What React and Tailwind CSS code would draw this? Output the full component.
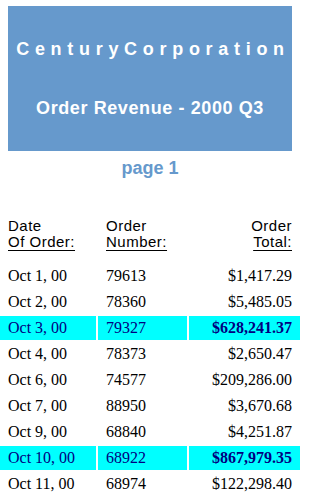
import React from "react";

const rows = [
  ["Oct 1, 00", "79613", "$1,417.29", false],
  ["Oct 2, 00", "78360", "$5,485.05", false],
  ["Oct 3, 00", "79327", "$628,241.37", true],
  ["Oct 4, 00", "78373", "$2,650.47", false],
  ["Oct 6, 00", "74577", "$209,286.00", false],
  ["Oct 7, 00", "88950", "$3,670.68", false],
  ["Oct 9, 00", "68840", "$4,251.87", false],
  ["Oct 10, 00", "68922", "$867,979.35", true],
  ["Oct 11, 00", "68974", "$122,298.40", false],
];

export default function App() {
  const sans = "font-['Liberation_Sans',Arial,sans-serif]";
  return (
    <div className="w-[311px] h-[503px] overflow-hidden bg-white">
      <div className={`mt-[6px] ml-[8px] w-[284px] h-[145px] bg-[#6699cc] text-white font-bold flex flex-col items-center ${sans}`}>
        <div className="mt-[33px] pl-[6px] text-[18px] leading-[21px] tracking-[5.7px] [word-spacing:-10.7px] whitespace-nowrap">
          Century Corporation
        </div>
        <div className="mt-[37px] text-[18px] leading-[22px] tracking-[0.6px] whitespace-nowrap">
          Order Revenue - 2000 Q3
        </div>
      </div>
      <div className={`mt-[6px] w-[300px] text-center text-[18px] leading-[22px] font-bold text-[#6699cc] ${sans}`}>
        page 1
      </div>
      <div className={`mt-[39px] grid grid-cols-[96px_89px_111px] gap-x-[2px] text-[15px] leading-[16px] tracking-[0.5px] text-black ${sans}`}>
        <div className="pl-[8px] flex flex-col items-start">
          <span>Date</span>
          <span className="underline underline-offset-[3px]">Of Order:</span>
        </div>
        <div className="pl-[8px] flex flex-col items-start">
          <span>Order</span>
          <span className="underline underline-offset-[3px]">Number:</span>
        </div>
        <div className="pr-[8px] flex flex-col items-end">
          <span>Order</span>
          <span className="underline underline-offset-[3px]">Total:</span>
        </div>
      </div>
      <div className="mt-[14px] grid grid-cols-[96px_89px_111px] gap-[2px] font-['Liberation_Serif','Times_New_Roman',serif] text-[16px] leading-[24px]">
        {rows.map(([d, n, t, hl], i) => (
          <React.Fragment key={i}>
            <div className={`h-[24px] pl-[8px] whitespace-nowrap ${hl ? "bg-[#00ffff] text-[#000080]" : "text-black"}`}>{d}</div>
            <div className={`h-[24px] pl-[8px] whitespace-nowrap ${hl ? "bg-[#00ffff] text-[#000080]" : "text-black"}`}>{n}</div>
            <div className={`h-[24px] pr-[8px] text-right whitespace-nowrap ${hl ? "bg-[#00ffff] text-[#000080] font-bold" : "text-black"}`}>{t}</div>
          </React.Fragment>
        ))}
      </div>
    </div>
  );
}
